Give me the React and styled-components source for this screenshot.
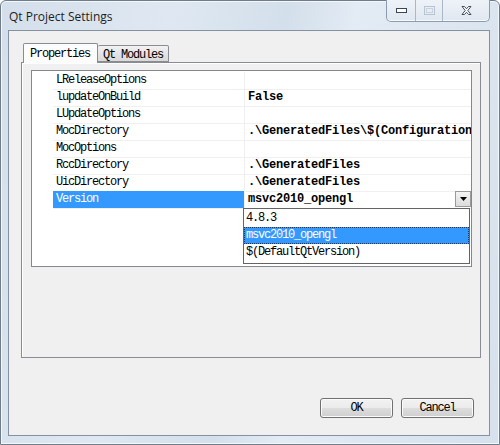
import React from "react";
import styled, { createGlobalStyle } from "styled-components";

const rows = [
  { name: "LReleaseOptions", value: "" },
  { name: "lupdateOnBuild", value: "False" },
  { name: "LUpdateOptions", value: "" },
  { name: "MocDirectory", value: ".\\GeneratedFiles\\$(Configuration" },
  { name: "MocOptions", value: "" },
  { name: "RccDirectory", value: ".\\GeneratedFiles" },
  { name: "UicDirectory", value: ".\\GeneratedFiles" },
  { name: "Version", value: "msvc2010_opengl", combo: true },
];

const versions = ["4.8.3", "msvc2010_opengl", "$(DefaultQtVersion)"];

const Global = createGlobalStyle`
  html, body {
    margin: 0;
    padding: 0;
    background: #ffffff;
  }
`;

const Window = styled.div`
  box-sizing: border-box;
  width: 500px;
  height: 445px;
  display: flex;
  flex-direction: column;
  border: 1px solid #6f7c8c;
  border-radius: 6px 6px 0 0;
  background: linear-gradient(
    100deg,
    #d4dfeb 0%,
    #dfe8f2 30%,
    #d3dfeb 50%,
    #e3ebf4 62%,
    #d6e1ed 100%
  );
  box-shadow: inset 0 0 0 1px #f4f8fc;
`;

const TitleBar = styled.div`
  height: 29px;
  display: flex;
  align-items: flex-start;
`;

const Title = styled.div`
  padding: 7px 0 0 8px;
  font-family: "Open Sans", "Noto Sans", sans-serif;
  font-size: 12px;
  color: #1e1e1e;
`;

const Caption = styled.div`
  margin-left: auto;
  margin-right: 9px;
  margin-top: -1px;
  display: flex;
  height: 21px;
  border: 1px solid #8d9bb0;
  border-top: none;
  border-radius: 0 0 5px 5px;
  background: linear-gradient(#eef3f8, #dfe7f0);
  box-shadow: inset 0 -1px 0 #f8fbfe;
  overflow: hidden;
`;

const CapButton = styled.div`
  width: ${(p) => p.w}px;
  display: flex;
  align-items: center;
  justify-content: center;
  border-left: ${(p) => (p.first ? "none" : "1px solid #aab7c8")};
`;

const Client = styled.div`
  flex: 1;
  margin: 0 9px 8px 7px;
  display: flex;
  flex-direction: column;
  padding: 12px 8px 17px 12px;
  border: 1px solid #8391a3;
  background: #f0f0f0;
`;

const TabBar = styled.div`
  display: flex;
  align-items: flex-end;
  height: 19px;
  padding-left: 2px;
  position: relative;
  z-index: 1;
`;

const Tab = styled.div`
  box-sizing: border-box;
  height: ${(p) => (p.active ? 20 : 17)}px;
  margin-bottom: ${(p) => (p.active ? -1 : 0)}px;
  padding: ${(p) => (p.active ? "3px 7px 0 6px" : "2px 5px 0 5px")};
  border: 1px solid #898c95;
  border-bottom: ${(p) => (p.active ? "none" : "1px solid #898c95")};
  border-left: ${(p) => (p.first ? "1px solid #898c95" : "none")};
  border-radius: 2px 2px 0 0;
  background: ${(p) =>
    p.active ? "#fcfcfc" : "linear-gradient(#f2f2f2, #e4e4e4 50%, #d9d9d9)"};
  font-family: "Liberation Mono", monospace;
  font-size: 12px;
  letter-spacing: -1.2px;
  color: #000;
  white-space: nowrap;
`;

const Pane = styled.div`
  box-sizing: border-box;
  height: 296px;
  padding: 7px 8px 0 9px;
  border: 1px solid #898c95;
  background: #f0f0f0;
  box-shadow: inset 1px 1px 0 #ffffff;
`;

const Table = styled.div`
  box-sizing: border-box;
  height: 197px;
  padding-top: 1px;
  border: 1px solid #828790;
  background: #ffffff;
  position: relative;
`;

const Row = styled.div`
  display: grid;
  grid-template-columns: 21px 191px 1fr;
  height: 17px;
`;

const Gutter = styled.div`
  background: #ffffff;
`;

const NameCell = styled.div`
  box-sizing: border-box;
  padding-left: 3px;
  line-height: 17px;
  border-bottom: 1px solid #f0f0f0;
  background: ${(p) => (p.selected ? "#3399ff" : "transparent")};
  color: ${(p) => (p.selected ? "#ffffff" : "#000000")};
  font-family: "Liberation Mono", monospace;
  font-size: 12px;
  letter-spacing: -1.2px;
  white-space: nowrap;
`;

const ValueCell = styled.div`
  box-sizing: border-box;
  position: relative;
  padding-left: 3px;
  line-height: 17px;
  border-bottom: 1px solid #f0f0f0;
  border-left: 1px solid #f0f0f0;
  font-family: "Liberation Mono", monospace;
  font-size: 12px;
  font-weight: bold;
  letter-spacing: -0.2px;
  white-space: nowrap;
  min-width: 0;
  overflow: ${(p) => (p.combo ? "visible" : "hidden")};
  color: #000;
`;

const Combo = styled.div`
  display: flex;
  align-items: center;
  height: 16px;
`;

const ComboText = styled.span`
  flex: 1;
`;

const DropButton = styled.div`
  box-sizing: border-box;
  width: 16px;
  height: 16px;
  display: flex;
  align-items: center;
  justify-content: center;
  border: 1px solid #9a9a9a;
  background: linear-gradient(#f4f4f4, #dcdcdc);
`;

const DropList = styled.div`
  position: absolute;
  top: 17px;
  left: -2px;
  right: 1px;
  box-sizing: border-box;
  height: 56px;
  border: 1px solid #646464;
  background: #ffffff;
  padding: 1px 0;
  z-index: 2;
`;

const DropItem = styled.div`
  height: 17px;
  line-height: 17px;
  padding-left: 2px;
  font-weight: normal;
  letter-spacing: -1.2px;
  background: ${(p) => (p.selected ? "#3399ff" : "transparent")};
  color: ${(p) => (p.selected ? "#ffffff" : "#000000")};
  outline: ${(p) => (p.selected ? "1px dotted #1a3a6a" : "none")};
  outline-offset: -1px;
`;

const Footer = styled.div`
  margin-top: auto;
  display: flex;
  justify-content: flex-end;
  gap: 8px;
  padding-right: 7px;
`;

const Button = styled.button`
  box-sizing: border-box;
  width: 73px;
  height: 20px;
  padding: 0;
  border: 1px solid #707070;
  border-radius: 3px;
  background: linear-gradient(#f2f2f2 0%, #ebebeb 48%, #dddddd 52%, #cfcfcf 100%);
  box-shadow: inset 0 0 0 1px #fbfbfb;
  font-family: "Liberation Mono", monospace;
  font-size: 12px;
  letter-spacing: -1.2px;
  color: #000;
`;

const MinIcon = () => (
  <svg width="11" height="5" viewBox="0 0 11 5">
    <rect x="0.5" y="0.5" width="10" height="4" fill="#ffffff" stroke="#3a4656" />
  </svg>
);

const MaxIcon = () => (
  <svg width="11" height="9" viewBox="0 0 11 9">
    <rect x="0.5" y="0.5" width="10" height="8" fill="none" stroke="#b7c3d2" />
    <rect x="2.5" y="2.5" width="6" height="4" fill="none" stroke="#c8d2de" />
  </svg>
);

const CloseIcon = () => (
  <svg width="11" height="9" viewBox="0 0 11 9">
    <path
      d="M1 0.5h2.5l2 2.3 2-2.3h2.5l-3.2 4 3.2 4h-2.5l-2-2.3-2 2.3h-2.5l3.2-4z"
      fill="#ffffff"
      stroke="#434e5c"
      strokeWidth="1"
      strokeLinejoin="round"
    />
  </svg>
);

const Arrow = () => (
  <svg width="7" height="4" viewBox="0 0 7 4">
    <path d="M0 0h7l-3.5 4z" fill="#000" />
  </svg>
);

export default function App() {
  return (
    <>
      <Global />
      <Window>
        <TitleBar>
          <Title>Qt Project Settings</Title>
          <Caption>
            <CapButton w={28} first>
              <MinIcon />
            </CapButton>
            <CapButton w={26}>
              <MaxIcon />
            </CapButton>
            <CapButton w={46}>
              <CloseIcon />
            </CapButton>
          </Caption>
        </TitleBar>
        <Client>
          <TabBar>
            <Tab active first>
              Properties
            </Tab>
            <Tab>Qt Modules</Tab>
          </TabBar>
          <Pane>
            <Table>
              {rows.map((r) => (
                <Row key={r.name}>
                  <Gutter />
                  <NameCell selected={r.combo}>{r.name}</NameCell>
                  <ValueCell combo={r.combo}>
                    {r.combo ? (
                      <>
                        <Combo>
                          <ComboText>{r.value}</ComboText>
                          <DropButton>
                            <Arrow />
                          </DropButton>
                        </Combo>
                        <DropList>
                          {versions.map((v) => (
                            <DropItem key={v} selected={v === r.value}>
                              {v}
                            </DropItem>
                          ))}
                        </DropList>
                      </>
                    ) : (
                      r.value
                    )}
                  </ValueCell>
                </Row>
              ))}
            </Table>
          </Pane>
          <Footer>
            <Button>OK</Button>
            <Button>Cancel</Button>
          </Footer>
        </Client>
      </Window>
    </>
  );
}
